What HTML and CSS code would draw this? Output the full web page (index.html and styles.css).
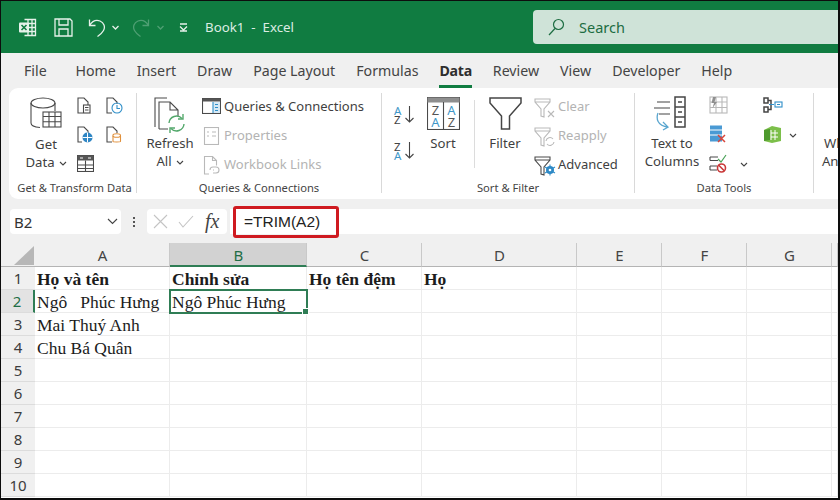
FILE: index.html
```html
<!DOCTYPE html>
<html lang="vi">
<head>
<meta charset="utf-8">
<title>Book1 - Excel</title>
<link rel="stylesheet" href="styles.css">
</head>
<body>
<div class="app">
<header class="titlebar">
  <svg class="t-logo" width="19" height="19" viewBox="0 0 19 19"><path class="w" d="M6.500 1.500h11v16h-11M10 1.500v16M10 5.500h7.500M10 9.500h7.500M10 13.500h7.500M14 1.500v16"/><rect class="wf" x="1" y="4.500" width="10" height="10" rx="1"/><path class="gs" d="M3.500 7l5 5M8.500 7l-5 5"/></svg>
  <svg class="t-save" width="19" height="19" viewBox="0 0 19 19"><path class="w" d="M1 1h15l2 2v15H1zM5 1v6h9V1M5 18v-7h9v7"/></svg>
  <svg class="t-undo" width="18" height="19" viewBox="0 0 18 19"><path class="w" d="M1.500 1.500v6h6M1.500 7.500C4 3.500 8 1.500 12 3c4 1.500 5.500 6 3.500 9.500-1.300 2.300-3.500 4.500-6 6"/></svg>
  <svg class="t-chev" width="7" height="5" viewBox="0 0 7 5"><path class="w" d="M.5 1l3 3 3-3"/></svg>
  <svg class="t-redo" width="18" height="19" viewBox="0 0 18 19"><path class="wd" d="M16.500 1.500v6h-6M16.500 7.500C14 3.500 10 1.500 6 3 2 4.500.5 9 2.500 12.500c1.300 2.300 3.500 4.500 6 6"/></svg>
  <svg class="t-chev2" width="7" height="5" viewBox="0 0 7 5"><path class="wd" d="M.5 1l3 3 3-3"/></svg>
  <svg class="t-cust" width="9" height="9" viewBox="0 0 9 9"><path class="w" d="M1 1h7M1 3.500l3.500 3.500L8 3.500M1 8h7" /></svg>
  <span class="doc">Book1&nbsp; -&nbsp; Excel</span>
  <div class="search">
    <svg width="17" height="18" viewBox="0 0 17 18"><circle class="gb" cx="10.500" cy="6.500" r="5"/><path class="gb" d="M7 10.500L1 17"/></svg>
    <span>Search</span>
  </div>
</header>

<nav class="tabs">
  <span class="file">File</span><span>Home</span><span>Insert</span><span>Draw</span><span>Page Layout</span><span>Formulas</span><span class="active">Data</span><span>Review</span><span>View</span><span>Developer</span><span>Help</span>
</nav>

<section class="ribbon">
  <div class="group g1">
    <div class="body">
      <div class="big b-get">
        <svg width="32" height="38" viewBox="0 0 32 38"><path class="s" d="M1 6v20c0 2 3 4 9 4.500M25 6v8"/><ellipse class="s" cx="13" cy="6" rx="12" ry="5"/><rect class="sf" x="13" y="15" width="18" height="15"/><path class="s" d="M13 19.500h18M13 24.700h18M19 15v15M25 15v15"/></svg>
        <span>Get</span>
        <span>Data <svg class="chev" width="8" height="5" viewBox="0 0 8 5"><path class="d" d="M1 1l3 3 3-3"/></svg></span>
      </div>
      <div class="smalls">
        <svg width="14" height="17" viewBox="0 0 14 17"><path class="s" d="M6 16H1V1h6l4 4v3"/><rect class="s" x="6.500" y="8" width="6.500" height="8"/><path class="s" d="M8 10.500h3.500M8 13h3.500"/></svg>
        <svg width="17" height="17" viewBox="0 0 17 17"><path class="s" d="M6 16H1V1h6l4 4v2"/><circle class="bs" cx="11" cy="11" r="5"/><path class="bs" d="M11 8v3.500h3"/></svg>
        <svg width="16" height="17" viewBox="0 0 16 17"><path class="s" d="M5 16H1V1h6l4 4v2"/><circle class="bf" cx="10.500" cy="11.500" r="5"/><path class="ws" d="M5.500 11.500h10M10.500 6.500v10"/></svg>
        <svg width="16" height="17" viewBox="0 0 16 17"><path class="s" d="M6 16H1V1h6l4 4v2"/><path class="os" d="M7 10v5.500c0 .500 7.500.500 7.500 0V10"/><ellipse class="os" cx="10.700" cy="9.500" rx="3.800" ry="1.800"/></svg>
        <svg class="wide" width="17" height="17" viewBox="0 0 17 17"><rect class="s" x=".5" y=".5" width="16" height="16"/><rect class="df" x=".5" y=".5" width="16" height="5"/><path class="s" d="M.5 10h16M.5 13.500h16M8.500 5.500v11"/><path class="ws" d="M3 3h3M11 3h3"/></svg>
      </div>
    </div>
    <div class="label">Get &amp; Transform Data</div>
  </div>

  <div class="group g2">
    <div class="body">
      <div class="big b-refresh">
        <svg width="32" height="37" viewBox="0 0 32 37"><path class="s" d="M1 30V1h12M5 32V5h11l8 8v6M16 5v8h8M5 32h9"/><path class="gr" d="M15 26a7.500 7.500 0 0 1 13-4.500M30 27a7.500 7.500 0 0 1-13 4.500"/><path class="gr" d="M29 17v5h-5M16 36v-5h5"/></svg>
        <span>Refresh</span>
        <span>All <svg class="chev" width="8" height="5" viewBox="0 0 8 5"><path class="d" d="M1 1l3 3 3-3"/></svg></span>
      </div>
      <div class="rows">
        <div class="row"><svg width="19" height="16" viewBox="0 0 19 16"><rect class="s" x=".5" y=".5" width="18" height="15"/><rect class="df" x=".5" y=".5" width="18" height="3"/><rect class="bfl" x="11" y="4" width="7" height="11"/><path class="bs" d="M11 4v11M13 6.500h3M13 9.500h3M13 12.500h3"/></svg><span>Queries &amp; Connections</span></div>
        <div class="row dim"><svg width="19" height="18" viewBox="0 0 19 18"><rect class="sd" x="2.500" y=".5" width="14" height="17"/><path class="sd" d="M5 5h2M10 5h4M5 9h2M10 9h4"/></svg><span>Properties</span></div>
        <div class="row dim"><svg width="19" height="19" viewBox="0 0 19 19"><path class="sd" d="M7 18H2.500V.5h8l4 4v5M10.500.5v4h4"/><path class="sd" d="M8 14a3 3 0 0 1 3-3h3a3 3 0 0 1 0 6h-3M12 14h-1"/></svg><span>Workbook Links</span></div>
      </div>
    </div>
    <div class="label">Queries &amp; Connections</div>
  </div>

  <div class="group g3">
    <div class="body">
      <div class="az">
        <div class="azbtn"><span class="azt"><b class="blue">A</b><b>Z</b></span><svg width="9" height="17" viewBox="0 0 9 17"><path class="d" d="M4.500 0v16M.5 12l4 4 4-4"/></svg></div>
        <div class="azbtn"><span class="azt"><b>Z</b><b class="blue">A</b></span><svg width="9" height="17" viewBox="0 0 9 17"><path class="d" d="M4.500 0v16M.5 12l4 4 4-4"/></svg></div>
      </div>
      <div class="big b-sort">
        <svg width="33" height="33" viewBox="0 0 33 33"><rect class="s" x=".5" y=".5" width="32" height="32"/><rect class="gf" x=".5" y=".5" width="32" height="5"/><path class="s" d="M16.500 5v28"/><text class="st" x="8.500" y="18">Z</text><text class="st blue-t" x="8.500" y="30">A</text><text class="st blue-t" x="24.500" y="18">A</text><text class="st" x="24.500" y="30">Z</text></svg>
        <span class="lbl-gap">Sort</span>
      </div>
      <div class="vsep"></div>
      <div class="big b-filter">
        <svg width="33" height="33" viewBox="0 0 33 33"><path class="s2" d="M1 1h31v5L20.500 19v13h-8V19L1 6z"/></svg>
        <span class="lbl-gap">Filter</span>
      </div>
      <div class="rows r3">
        <div class="row dim"><svg width="22" height="20" viewBox="0 0 22 20"><path class="sd" d="M1 1h15v3l-6 7v8l-3-1v-7L1 4zM1 4h15"/><path class="sd" d="M14 13l6 6M20 13l-6 6"/></svg><span>Clear</span></div>
        <div class="row dim"><svg width="22" height="20" viewBox="0 0 22 20"><path class="sd" d="M1 1h15v3l-6 7v8l-3-1v-7L1 4zM1 4h15"/><path class="sd" d="M12 14a4 4 0 0 1 7-2M20 15a4 4 0 0 1-7 2"/></svg><span>Reapply</span></div>
        <div class="row"><svg width="22" height="20" viewBox="0 0 22 20"><path class="s" d="M1 1h15v3l-6 7v8l-3-1v-7L1 4zM1 4h15"/><circle class="bf" cx="16" cy="14" r="4"/><path class="bs" d="M16 8.500v11M11 11l10 6M21 11l-10 6"/><circle class="wfill" cx="16" cy="14" r="1.300"/></svg><span>Advanced</span></div>
      </div>
    </div>
    <div class="label">Sort &amp; Filter</div>
  </div>

  <div class="group g4">
    <div class="body">
      <div class="big b-text">
        <svg width="37" height="36" viewBox="0 0 37 36"><path class="d" d="M3 6h13M0 12h16M5 18h11"/><rect class="s2" x="21" y="1" width="10" height="30"/><path class="s2" d="M21 11h10M21 21h10M24 6h4M24 16h4M24 26h4"/><path class="bs2" d="M4 17c-2 5 -1 13 10 14M9 26l5 5-5 3"/></svg>
        <span>Text to</span>
        <span>Columns</span>
      </div>
      <div class="tools">
        <svg width="19" height="18" viewBox="0 0 19 18"><rect class="sd" x="1" y="1" width="17" height="16"/><path class="sd" d="M1 6h17M1 11.500h17M7 1v16M13 1v16"/><path class="lf" d="M4 1h3L5.500 6H8L3.500 12 5 7H2.500z"/></svg>
        <svg width="18" height="18" viewBox="0 0 18 18"><rect class="bfl2" x="1" y=".5" width="12" height="16"/><path class="ws" d="M1 5h12M1 10h12"/><path class="rs" d="M9 10l7 7M16 10l-7 7"/></svg>
        <div class="withchev"><svg width="18" height="19" viewBox="0 0 18 19"><path class="s" d="M1 3h8M1 6.500h8M1 3v3.500M1 12h7M1 16h7M1 12v4"/><path class="grs" d="M9 5l3 3 5-7"/><circle class="rds" cx="12.500" cy="14" r="4"/><path class="rds" d="M9.800 11.300l5.400 5.400"/></svg><svg class="tchev" width="8" height="5" viewBox="0 0 8 5"><path class="d" d="M1 1l3 3 3-3"/></svg></div>
      </div>
      <div class="tools t2">
        <svg width="20" height="16" viewBox="0 0 20 16"><path class="s2" d="M5 1H1v5h4zM5 10H1v5h4zM5 3.500h3v9H5"/><rect class="bs" x="12" y="5" width="7" height="5"/><path class="bs" d="M6 7.500h5M14 7.500h3"/></svg>
        <div class="withchev"><svg width="20" height="19" viewBox="0 0 20 19"><path class="lgf" d="M1 5l8-4 9 2v13l-9 2-8-2z"/><path class="ws" d="M8 5v10M12 5v10M8 8h7M8 12h7"/><path class="dgf" d="M1 5l6-1v11l-6 1z"/></svg><svg class="tchev" width="8" height="5" viewBox="0 0 8 5"><path class="d" d="M1 1l3 3 3-3"/></svg></div>
      </div>
    </div>
    <div class="label">Data Tools</div>
  </div>

  <div class="group g5">
    <div class="body">
      <div class="big b-what"><span>What-If</span><span>Analysis</span></div>
    </div>
  </div>
</section>

<section class="fbar">
  <div class="namebox"><span>B2</span><svg width="11" height="7" viewBox="0 0 11 7"><path class="d" d="M1 1l4.500 4.500L10 1"/></svg></div>
  <div class="dots"><i></i><i></i><i></i></div>
  <div class="fx">
    <svg width="15" height="15" viewBox="0 0 15 15"><path class="sl" d="M1 1l13 13M14 1L1 14"/></svg>
    <svg width="16" height="13" viewBox="0 0 16 13"><path class="sl" d="M1 7l4 5L15 1"/></svg>
    <em>fx</em>
  </div>
  <div class="input"><div class="formula">=TRIM(A2)</div></div>
</section>

<section class="sheet">
  <div class="corner"><svg width="20" height="19" viewBox="0 0 20 19"><path class="tri" d="M20 0v19H0z"/></svg></div>
  <div class="ch">A</div><div class="ch sel">B</div><div class="ch">C</div><div class="ch">D</div><div class="ch">E</div><div class="ch">F</div><div class="ch">G</div><div class="ch">&nbsp;</div>

  <div class="rh">1</div><div class="c b">Họ và tên</div><div class="c b">Chỉnh sửa</div><div class="c b">Họ tên đệm</div><div class="c b">Họ</div><div class="c"></div><div class="c"></div><div class="c"></div><div class="c"></div>
  <div class="rh rsel">2</div><div class="c pre">Ngô   Phúc Hưng</div><div class="c active">Ngô Phúc Hưng</div><div class="c"></div><div class="c"></div><div class="c"></div><div class="c"></div><div class="c"></div><div class="c"></div>
  <div class="rh">3</div><div class="c">Mai Thuý Anh</div><div class="c"></div><div class="c"></div><div class="c"></div><div class="c"></div><div class="c"></div><div class="c"></div><div class="c"></div>
  <div class="rh">4</div><div class="c">Chu Bá Quân</div><div class="c"></div><div class="c"></div><div class="c"></div><div class="c"></div><div class="c"></div><div class="c"></div><div class="c"></div>
  <div class="rh">5</div><div class="c"></div><div class="c"></div><div class="c"></div><div class="c"></div><div class="c"></div><div class="c"></div><div class="c"></div><div class="c"></div>
  <div class="rh">6</div><div class="c"></div><div class="c"></div><div class="c"></div><div class="c"></div><div class="c"></div><div class="c"></div><div class="c"></div><div class="c"></div>
  <div class="rh">7</div><div class="c"></div><div class="c"></div><div class="c"></div><div class="c"></div><div class="c"></div><div class="c"></div><div class="c"></div><div class="c"></div>
  <div class="rh">8</div><div class="c"></div><div class="c"></div><div class="c"></div><div class="c"></div><div class="c"></div><div class="c"></div><div class="c"></div><div class="c"></div>
  <div class="rh">9</div><div class="c"></div><div class="c"></div><div class="c"></div><div class="c"></div><div class="c"></div><div class="c"></div><div class="c"></div><div class="c"></div>
  <div class="rh">10</div><div class="c"></div><div class="c"></div><div class="c"></div><div class="c"></div><div class="c"></div><div class="c"></div><div class="c"></div><div class="c"></div>
</section>
</div>
</body>
</html>
```

FILE: styles.css
```css
* { box-sizing: border-box; }
html, body { margin: 0; padding: 0; }
body { width: 840px; height: 500px; overflow: hidden; background: #fff; font-family: "Noto Sans", "Open Sans", sans-serif; color: #3a3a3a; }
.app { width: 840px; height: 500px; overflow: hidden; display: flex; flex-direction: column; border-style: solid; border-color: #0d0d0d; border-width: 1px 2px 2px 1px; background: #f0f0f0; }

svg { display: block; flex: none; }
.w { fill: none; stroke: #e6f1ea; stroke-width: 1.3; }
.wf { fill: #e6f1ea; }
.wd { fill: none; stroke: #4e9f73; stroke-width: 1.3; }
.gs { fill: none; stroke: #107c41; stroke-width: 1.6; }
.gb { fill: none; stroke: #1d6d42; stroke-width: 1.2; }
.s { fill: none; stroke: #4a4a4a; stroke-width: 1.1; }
.s2 { fill: none; stroke: #454545; stroke-width: 1.5; }
.sf { fill: #fff; stroke: #4a4a4a; stroke-width: 1.1; }
.sd { fill: none; stroke: #b9b9b9; stroke-width: 1.1; }
.sl { fill: none; stroke: #c4c4c4; stroke-width: 1.1; }
.d { fill: none; stroke: #444; stroke-width: 1.1; }
.bs { fill: none; stroke: #2f8fc9; stroke-width: 1.1; }
.bs2 { fill: none; stroke: #5aa6cf; stroke-width: 1.3; }
.bf { fill: #2f86c4; }
.bfl { fill: #d7e9f5; }
.bfl2 { fill: #4a9ad4; }
.ws { fill: none; stroke: #fff; stroke-width: 1; }
.wfill { fill: #fff; }
.os { fill: none; stroke: #e0903c; stroke-width: 1.1; }
.df { fill: #555; }
.gf { fill: #8e8e8e; }
.gr { fill: none; stroke: #54a86c; stroke-width: 1.4; }
.grs { fill: none; stroke: #4ca35a; stroke-width: 1.2; }
.rs { fill: none; stroke: #d8443a; stroke-width: 1.5; }
.rds { fill: none; stroke: #c93838; stroke-width: 1.6; }
.lf { fill: #8f8f8f; }
.lgf { fill: #7cbf4a; }
.dgf { fill: #4e9a2e; }
.tri { fill: #b7b7b7; }
.st { font: 13px "Noto Sans", sans-serif; fill: #555; text-anchor: middle; }
.blue-t { fill: #3f97c8; }

/* title bar */
.titlebar { flex: none; height: 52px; background: #107c41; display: flex; align-items: center; padding-left: 17px; }
.t-save { margin-left: 17px; }
.t-undo { margin-left: 15px; }
.t-chev { margin-left: 6px; }
.t-redo { margin-left: 13px; }
.t-chev2 { margin-left: 7px; }
.t-cust { margin-left: 15px; }
.doc { margin-left: 17px; font-size: 13.3px; color: #dcece3; white-space: nowrap; }
.search { margin-left: auto; width: 305px; height: 34px; background: #cfe3d8; border-radius: 4px 0 0 4px; display: flex; align-items: center; gap: 14px; padding-left: 15px; color: #1d6d42; font-size: 14.5px; }

/* tabs */
.tabs { flex: none; height: 35px; display: flex; gap: 21px; padding: 8px 0 0 23px; font-size: 14.2px; color: #444; line-height: 20px; }
.tabs .file { margin-right: 7.7px; }
.tabs .active { font-weight: 700; color: #2e2e2e; height: 27px; border-bottom: 3px solid #107c41; letter-spacing: -.3px; }

/* ribbon */
.ribbon { flex: none; height: 111px; margin-left: 8px; background: #fff; border-radius: 9px 0 0 9px; display: flex; overflow: hidden; font-size: 13.2px; color: #3f3f3f; }
.group { flex: none; display: flex; flex-direction: column; border-right: 1px solid #d9d9d9; margin: 5px 0 6px; }
.group .body { flex: 1; display: flex; min-height: 0; }
.label { flex: none; height: 14px; line-height: 17px; text-align: center; font-size: 11.2px; color: #444; white-space: nowrap; }
.g1 .label { padding-left: 4px; }
.g1 { width: 128px; }
.g2 { width: 245px; }
.g3 { width: 253px; }
.g4 { width: 179px; }
.g5 { width: 40px; border-right: 0; }

.big { flex: none; display: flex; flex-direction: column; align-items: center; line-height: 18px; white-space: nowrap; }
.big > span { display: flex; align-items: center; gap: 4px; }
.chev { margin-top: 2px; }
.b-get { width: 44px; margin-left: 15px; padding-top: 4px; }
.b-refresh { width: 46px; margin-left: 10px; padding-top: 4px; }
.b-sort { width: 40px; margin-left: 9px; padding-top: 4px; }
.b-filter { width: 40px; margin-left: 10px; padding-top: 4px; }
.b-text { width: 60px; margin-left: 7px; padding-top: 3px; }
.b-text > svg { margin-bottom: 2px; }
.b-what { width: 60px; margin-left: 3px; padding-top: 41px; }
.lbl-gap { margin-top: 4px; }

.smalls { display: grid; grid-template-columns: 29px 20px; grid-auto-rows: 29px; margin-left: 9px; padding-top: 4px; align-items: start; }
.smalls .wide { grid-column: 1 / 3; }

.rows { flex: none; display: flex; flex-direction: column; margin-left: 9px; padding-top: 5px; }
.rows.r3 { margin-left: 9px; }
.row { flex: none; height: 29px; display: flex; align-items: flex-start; gap: 3px; line-height: 17px; white-space: nowrap; font-size: 13px; }
.r3 .row { gap: 2px; }
.dim { color: #b3b3b3; }

.az { flex: none; width: 20px; margin-left: 12px; padding-top: 12px; display: flex; flex-direction: column; gap: 17px; }
.azbtn { display: flex; align-items: center; gap: 1px; height: 19px; }
.azt { display: flex; flex-direction: column; width: 11px; }
.azt b { font-weight: 400; font-size: 11.5px; line-height: 9px; color: #444; }
.azt .blue { color: #3f97c8; }

.vsep { flex: none; width: 1px; height: 68px; background: #dcdcdc; margin: 7px 0 0 11px; }

.tools { flex: none; display: flex; flex-direction: column; gap: 11px; margin-left: 7px; padding-top: 3px; width: 56px; }
.tools.t2 { gap: 12px; width: 40px; margin-left: -2px; padding-top: 4px; }
.withchev { display: flex; align-items: center; gap: 13px; }
.t2 .withchev { gap: 6px; }
.tchev { margin-top: 2px; }

/* formula bar */
.fbar { flex: none; height: 44px; padding-top: 10px; display: flex; align-items: flex-start; }
.namebox { width: 111px; height: 25px; margin-left: 9px; background: #fff; border-radius: 4px; display: flex; align-items: center; justify-content: space-between; padding: 0 3px 0 4px; font-size: 15px; color: #333; }
.dots { width: 26px; height: 25px; display: flex; flex-direction: column; align-items: center; justify-content: center; gap: 2px; }
.dots i { width: 2px; height: 2px; background: #555; }
.fx { width: 80px; height: 25px; background: #fff; border-radius: 4px; display: flex; align-items: center; gap: 10px; padding-left: 6px; }
.fx em { font: italic 20px "Liberation Serif", serif; color: #444; margin-left: 1px; }
.input { flex: 1; height: 25px; margin-left: 3px; background: #fff; position: relative; }
.formula { position: absolute; left: 3px; top: -3px; width: 106px; height: 32px; border: 3px solid #cf1a20; border-radius: 3px; padding-left: 8px; font: 15.5px/26px "Liberation Sans", sans-serif; color: #222; }

/* sheet */
.sheet { flex: 1; display: grid; grid-template-columns: 34px 135px 137px 115px 155px 85px 85px 85px 1fr; grid-template-rows: 24px repeat(10, 23px); background: #fff; overflow: hidden; min-height: 0; }
.corner { background: #f0f0f0; border-bottom: 1px solid #b4b4b4; padding: 3px 0 0 13px; }
.ch { background: #f0f0f0; border-bottom: 1px solid #b4b4b4; border-right: 1px solid #c9c9c9; text-align: center; font: 15px/24px "Noto Sans", sans-serif; color: #444; padding-left: 1px; }
.ch.sel { background: #d2d2d2; border-bottom: 2px solid #2f7d55; color: #1f6e46; }
.rh { background: #f0f0f0; border-bottom: 1px solid #dcdcdc; text-align: center; font: 15px/22px "Noto Sans", sans-serif; color: #3c3c3c; }
.rh.rsel { background: #e3e3e3; color: #1f6e46; border-right: 2px solid #2f7d55; }
.c { border-right: 1px solid #ececec; border-bottom: 1px solid #ececec; font: 17.5px/24px "Liberation Serif", serif; color: #1c1c1c; padding-left: 2px; white-space: nowrap; }
.c.b { font-weight: 700; }
.c.pre { white-space: pre; }
.c.active { outline: 2px solid #2f7d55; outline-offset: -1px; position: relative; }
.c.active::after { content: ""; position: absolute; right: -3px; bottom: -3px; width: 5px; height: 5px; background: #2f7d55; border: 1px solid #fff; }
```
